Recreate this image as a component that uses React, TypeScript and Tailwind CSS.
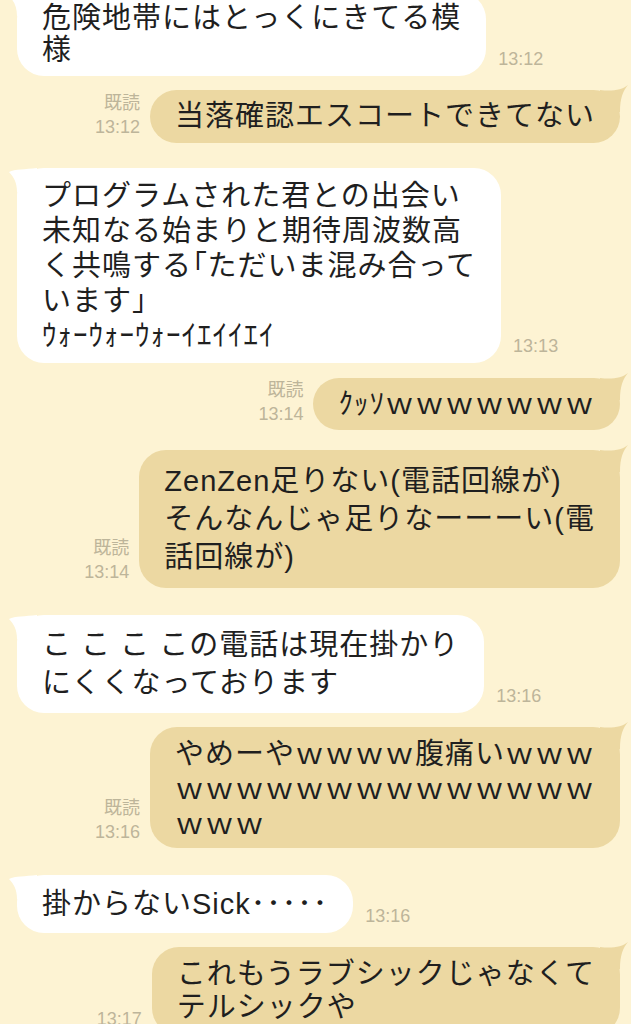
import type { ReactNode } from "react"

type Message = {
  from: "me" | "them"
  lines: ReactNode[]
  time: string
  read?: boolean
  row: string
  box: string
}

const messages: Message[] = [
  {
    from: "them",
    lines: ["危険地帯にはとっくにきてる模", "様"],
    time: "13:12",
    row: "-mt-[8px]",
    box: "leading-[32px] py-[10px]"
  },
  {
    from: "me",
    lines: ["当落確認エスコートできてない"],
    time: "13:12",
    read: true,
    row: "mt-[14px]",
    box: "leading-[33px] py-[10px]"
  },
  {
    from: "them",
    lines: [
      "プログラムされた君との出会い",
      "未知なる始まりと期待周波数高",
      <>
        く共鳴する<span className="[font-feature-settings:'palt']">「</span>ただいま混み合って
      </>,
      "います」",
      "ｳｫｰｳｫｰｳｫｰｲｴｲｲｴｲ"
    ],
    time: "13:13",
    row: "mt-[25px]",
    box: "leading-[35px] pt-[11px] pb-[9px]"
  },
  {
    from: "me",
    lines: ["ｸｯｿｗｗｗｗｗｗｗ"],
    time: "13:14",
    read: true,
    row: "mt-[15px]",
    box: "leading-[32px] py-[10px]"
  },
  {
    from: "me",
    lines: ["ZenZen足りない(電話回線が)", "そんなんじゃ足りなーーーい(電", "話回線が)"],
    time: "13:14",
    read: true,
    row: "mt-[20px]",
    box: "leading-[38px] py-[12px]"
  },
  {
    from: "them",
    lines: ["こ こ こ この電話は現在掛かり", "にくくなっております"],
    time: "13:16",
    row: "mt-[27px]",
    box: "leading-[38px] py-[11px]"
  },
  {
    from: "me",
    lines: ["やめーやｗｗｗｗ腹痛いｗｗｗ", "ｗｗｗｗｗｗｗｗｗｗｗｗｗｗ", "ｗｗｗ"],
    time: "13:16",
    read: true,
    row: "mt-[14px]",
    box: "leading-[35px] pt-[10px] pb-[6px]"
  },
  {
    from: "them",
    lines: ["掛からないSick･････"],
    time: "13:16",
    row: "mt-[27px]",
    box: "leading-[34px] py-[12px]"
  },
  {
    from: "me",
    lines: ["これもうラブシックじゃなくて", "テルシックや"],
    time: "13:17",
    row: "mt-[14px]",
    box: "leading-[33px] py-[11px]"
  }
]

const TheirTail = () => (
  <svg className="absolute top-0 left-[-10px]" width="32" height="26" viewBox="0 0 32 26">
    <path d="M30 0 C18 1.5 8 1 2 4 C7 9 10 15 10 24 L30 24 Z" fill="#ffffff" />
  </svg>
)

const MyTail = () => (
  <svg className="absolute top-[-6px] right-[-10px]" width="32" height="30" viewBox="0 0 32 30">
    <path d="M2 6 C14 7.5 24 6 30 1 C25 7 22 14 22 28 L2 28 Z" fill="#ecd8a2" />
  </svg>
)

const Bubble = ({ msg }: { msg: Message }) => {
  const mine = msg.from === "me"
  return (
    <div
      className={`relative rounded-[27px] px-[25px] whitespace-nowrap text-[29px] tracking-[1px] text-[#1f1f1f] ${
        mine ? "bg-[#ecd8a2]" : "bg-white"
      } ${msg.box}`}
    >
      {mine ? <MyTail /> : <TheirTail />}
      <div className="relative">
        {msg.lines.map((line, i) => (
          <div key={i}>{line}</div>
        ))}
      </div>
    </div>
  )
}

const Row = ({ msg }: { msg: Message }) => {
  if (msg.from === "them")
    return (
      <div className={`flex items-end gap-[12px] pl-[17px] ${msg.row}`}>
        <Bubble msg={msg} />
        <span className="pb-[5px] text-[18px] leading-[24px] text-[#bdb59a]">{msg.time}</span>
      </div>
    )

  return (
    <div className={`flex items-end justify-end gap-[10px] pr-[11px] ${msg.row}`}>
      <div className="flex flex-col items-end pb-[4px] text-[18px] leading-[24px] text-[#bdb59a]">
        {msg.read && <span>既読</span>}
        <span>{msg.time}</span>
      </div>
      <Bubble msg={msg} />
    </div>
  )
}

export default function App() {
  return (
    <div className="h-[1024px] w-full overflow-hidden bg-[#fdf3d3] font-['Liberation_Sans','Noto_Sans_CJK_JP',sans-serif]">
      {messages.map((msg, i) => (
        <Row key={i} msg={msg} />
      ))}
    </div>
  )
}
